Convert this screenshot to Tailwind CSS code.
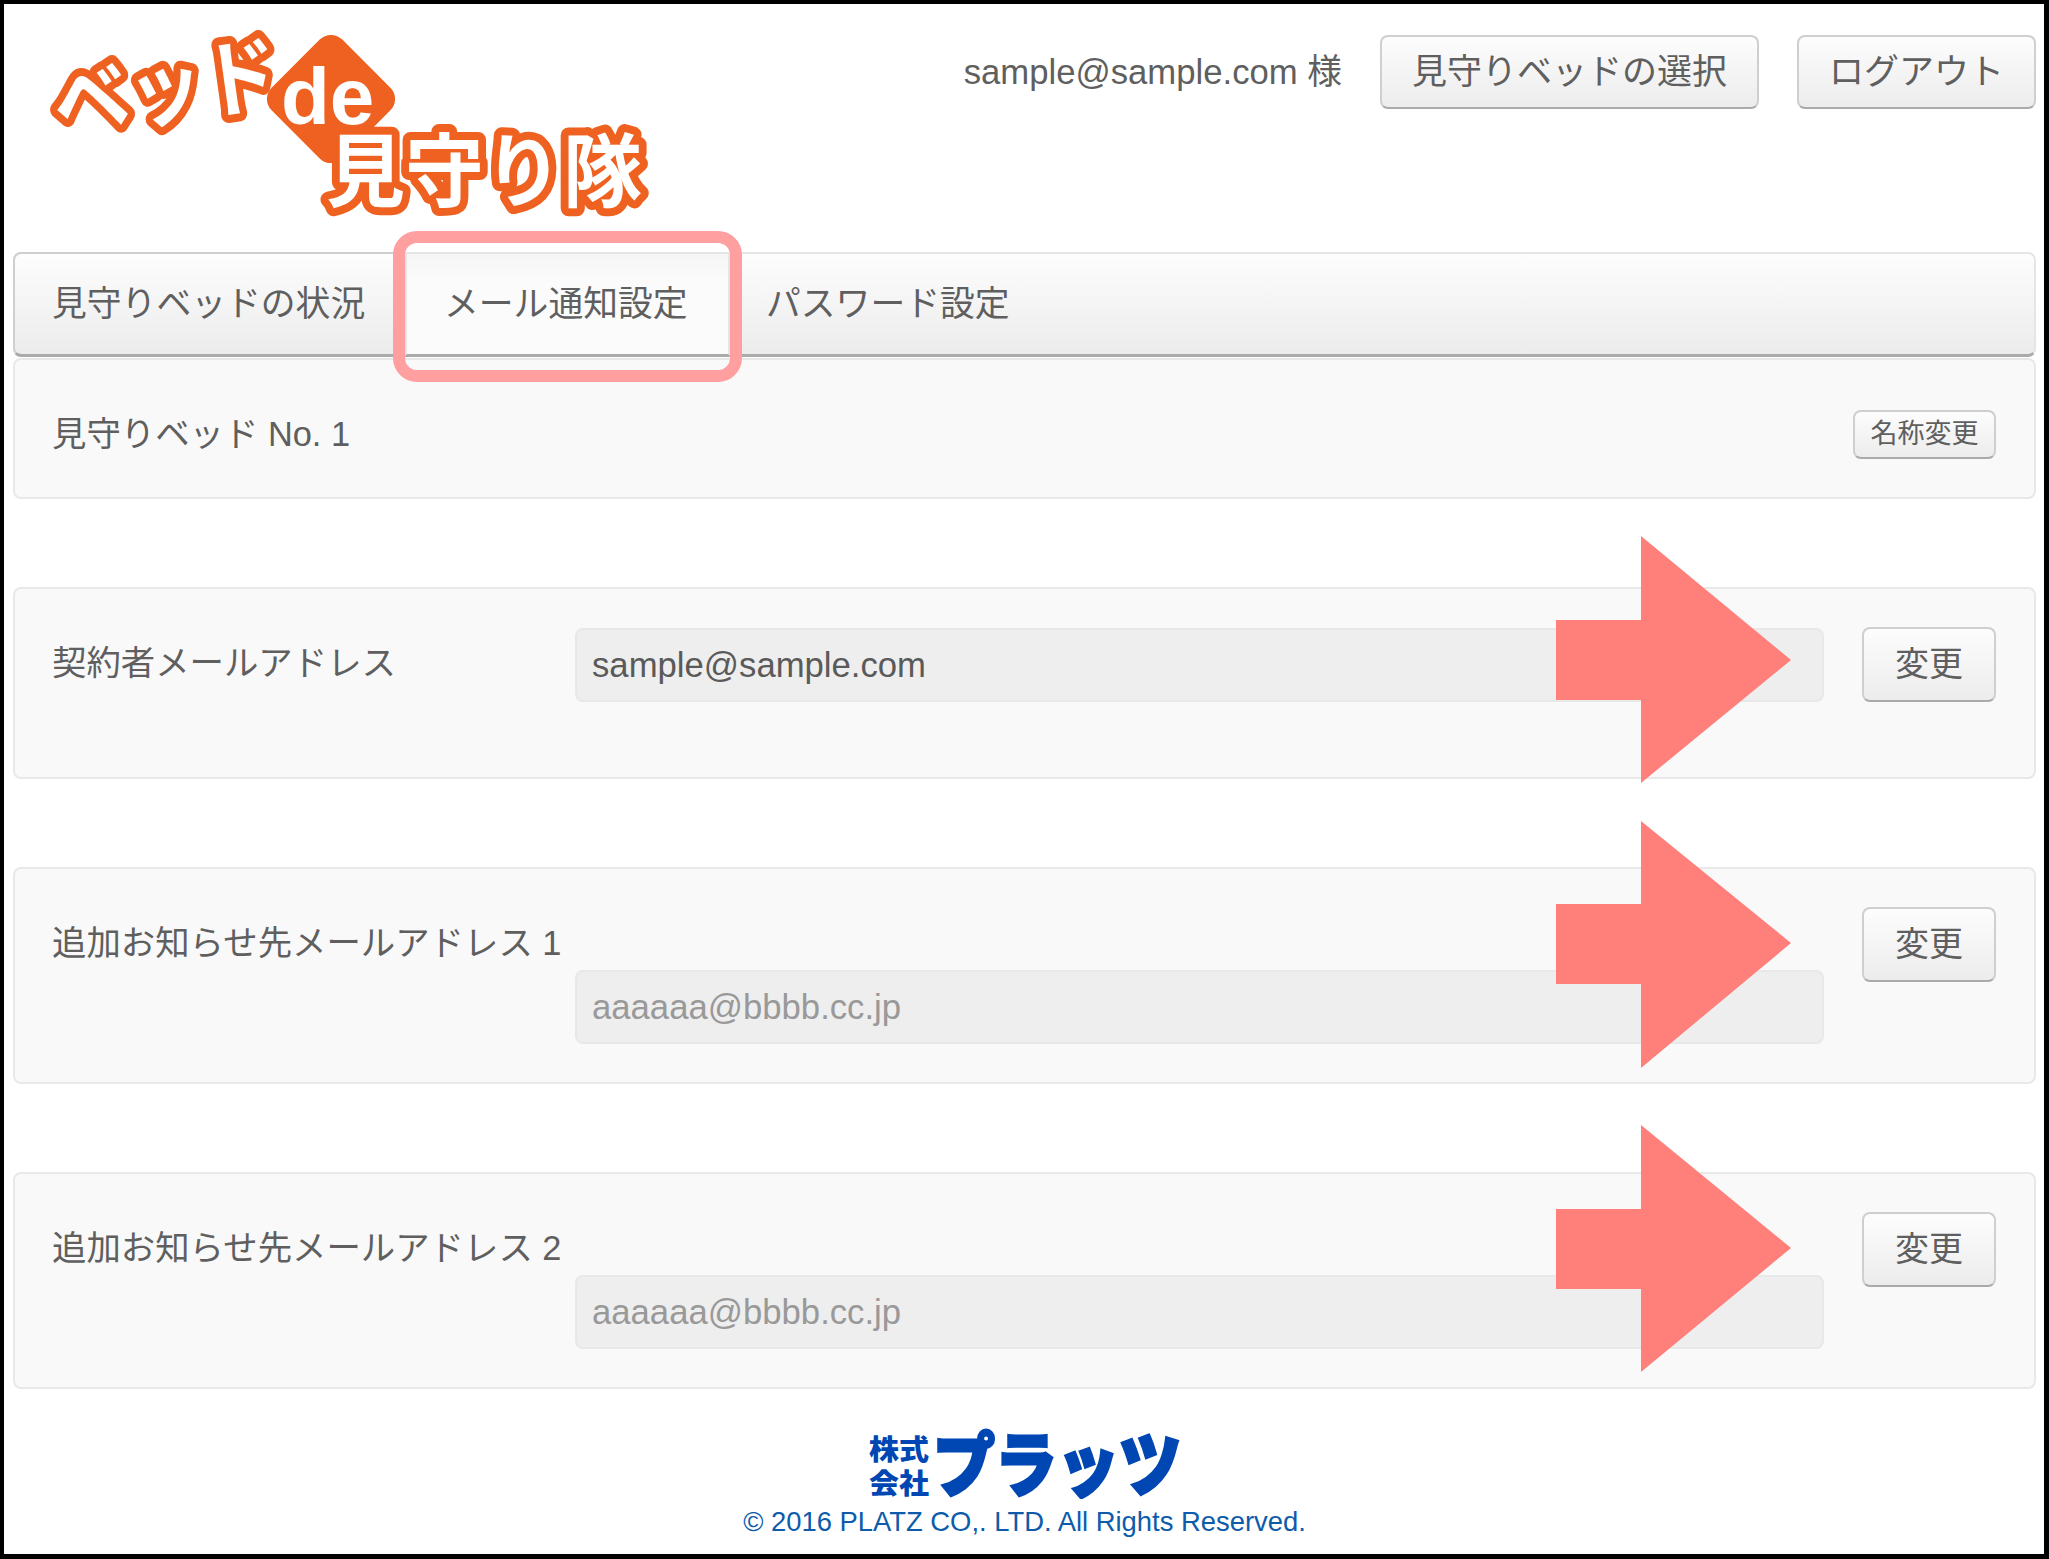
<!DOCTYPE html>
<html lang="ja">
<head>
  <meta charset="UTF-8">
  <title>ベッドde見守り隊 - メール通知設定</title>
  <script src="https://cdn.jsdelivr.net/npm/@tailwindcss/browser@4"></script>
</head>
<body class="bg-black">
  <div class="relative w-[2049px] h-[1559px] bg-black pt-[4px] pb-[5px] pl-[4px] pr-[5px] [font-family:'Liberation_Sans','Noto_Sans_CJK_JP',sans-serif] text-[#5f5f5f]">
    <div class="h-full bg-white pl-[9px] pr-[8px]">

      <!-- Header -->
      <header class="flex justify-between h-[248px] -ml-[9px]">
        <svg class="w-[660px] h-[248px]" viewBox="4 4 660 248">
          <rect x="281" y="49" width="100" height="100" rx="16" fill="#ee6120" transform="rotate(45 331 99)"/>
          <g fill="#fff" stroke="#ee6120" stroke-width="16" stroke-linejoin="round" paint-order="stroke" font-weight="700" class="[font-family:'Noto_Sans_CJK_JP',sans-serif]">
            <text x="58" y="134" font-size="84" transform="rotate(-8 58 134)" textLength="226" lengthAdjust="spacingAndGlyphs">ベッド</text>
            <text x="326" y="200" font-size="80" textLength="316" lengthAdjust="spacingAndGlyphs">見守り隊</text>
          </g>
          <text x="281" y="124" font-size="80" font-weight="700" fill="#fff" class="[font-family:'Liberation_Sans',sans-serif]">de</text>
        </svg>
        <div class="flex items-start pt-[31px]">
          <span class="text-[34.7px] leading-[74px] mr-[38px]">sample@sample.com 様</span>
          <button class="w-[379px] h-[74px] mr-[38px] text-[35px] rounded-lg border-2 border-[#cfcfcf] border-b-[#aaaaaa] bg-linear-to-b from-[#fdfdfd] to-[#ececec]">見守りベッドの選択</button>
          <button class="w-[239px] h-[74px] text-[35px] rounded-lg border-2 border-[#cfcfcf] border-b-[#aaaaaa] bg-linear-to-b from-[#fdfdfd] to-[#ececec]">ログアウト</button>
        </div>
      </header>

      <!-- Tabs -->
      <nav class="flex h-[105px] rounded-lg border-2 border-[#e5e5e5] border-b-[3px] border-b-[#aaaaaa] bg-linear-to-b from-[#fdfdfd] to-[#ececec] text-[34.8px]">
        <a class="flex items-center w-[392px] pl-[37px] -my-[2px] -ml-[2px] rounded-l-lg border-2 border-r-0 border-[#cfcfcf] border-b-[#aaaaaa]">見守りベッドの状況</a>
        <a class="flex items-center w-[325px] pl-[37px] -my-[2px] border-2 border-[#e5e5e5] border-b-[#aaaaaa] bg-linear-to-b from-[#f6f6f6] to-[#fbfbfb] to-30%">メール通知設定</a>
        <a class="flex items-center pl-[36px]">パスワード設定</a>
      </nav>

      <!-- Bed name -->
      <section class="flex items-center justify-between h-[141px] mt-[1px] pt-[12px] pl-[37px] pr-[38px] rounded-lg border-2 border-[#e8e8e8] bg-[#f9f9f9]">
        <span class="text-[34.4px]">見守りベッド No. 1</span>
        <button class="w-[143px] h-[49px] text-[27px] rounded-lg border-2 border-[#cfcfcf] border-b-[#aaaaaa] bg-linear-to-b from-[#fdfdfd] to-[#ececec]">名称変更</button>
      </section>

      <!-- Contract address -->
      <section class="flex h-[192px] mt-[88px] pt-[38px] pl-[37px] pr-[38px] rounded-lg border-2 border-[#e8e8e8] bg-[#f9f9f9]">
        <div class="flex flex-1">
          <div class="w-[523px] text-[34.4px] leading-[72px]">契約者メールアドレス</div>
          <div class="flex items-center h-[74px] flex-1 px-[15px] mt-[1px] text-[34.7px] text-[#5a5a5a] rounded-lg border-2 border-[#e8e8e8] bg-[#eeeeee]">sample@sample.com</div>
        </div>
        <button class="w-[134px] h-[75px] ml-[38px] text-[34px] rounded-lg border-2 border-[#cfcfcf] border-b-[#aaaaaa] bg-linear-to-b from-[#fdfdfd] to-[#ececec]">変更</button>
      </section>

      <!-- Extra address 1 -->
      <section class="flex h-[217px] mt-[88px] pt-[38px] pl-[37px] pr-[38px] rounded-lg border-2 border-[#e8e8e8] bg-[#f9f9f9]">
        <div class="flex-1">
          <div class="h-[63px] text-[34.4px] leading-[72px]">追加お知らせ先メールアドレス 1</div>
          <div class="flex items-center h-[74px] ml-[523px] px-[15px] text-[34.7px] text-[#999999] rounded-lg border-2 border-[#e8e8e8] bg-[#eeeeee]">aaaaaa@bbbb.cc.jp</div>
        </div>
        <button class="w-[134px] h-[75px] ml-[38px] text-[34px] rounded-lg border-2 border-[#cfcfcf] border-b-[#aaaaaa] bg-linear-to-b from-[#fdfdfd] to-[#ececec]">変更</button>
      </section>

      <!-- Extra address 2 -->
      <section class="flex h-[217px] mt-[88px] pt-[38px] pl-[37px] pr-[38px] rounded-lg border-2 border-[#e8e8e8] bg-[#f9f9f9]">
        <div class="flex-1">
          <div class="h-[63px] text-[34.4px] leading-[72px]">追加お知らせ先メールアドレス 2</div>
          <div class="flex items-center h-[74px] ml-[523px] px-[15px] text-[34.7px] text-[#999999] rounded-lg border-2 border-[#e8e8e8] bg-[#eeeeee]">aaaaaa@bbbb.cc.jp</div>
        </div>
        <button class="w-[134px] h-[75px] ml-[38px] text-[34px] rounded-lg border-2 border-[#cfcfcf] border-b-[#aaaaaa] bg-linear-to-b from-[#fdfdfd] to-[#ececec]">変更</button>
      </section>

      <!-- Footer -->
      <footer class="flex flex-col items-center pt-[36px]">
        <svg class="w-[316px] h-[74px]" viewBox="866 1424 316 74">
          <g fill="#0047b3" font-weight="900" class="[font-family:'Noto_Sans_CJK_JP',sans-serif]">
            <text x="868" y="1459" font-size="28" textLength="60" lengthAdjust="spacingAndGlyphs">株式</text>
            <text x="868" y="1493" font-size="28" textLength="60" lengthAdjust="spacingAndGlyphs">会社</text>
            <text x="932" y="1490" font-size="70" stroke="#0047b3" stroke-width="3" textLength="248" lengthAdjust="spacingAndGlyphs">プラッツ</text>
          </g>
        </svg>
        <p class="mt-[7px] text-[27.4px] leading-[32px] text-[#0d5cab]">© 2016 PLATZ CO,. LTD. All Rights Reserved.</p>
      </footer>
    </div>

    <!-- Annotations drawn over the page -->
    <div class="absolute left-[393px] top-[231px] w-[349px] h-[151px] rounded-[24px] border-[12px] border-[#ff9f9f]"></div>
    <svg class="absolute left-0 top-0 w-[2049px] h-[1559px] pointer-events-none" viewBox="0 0 2049 1559">
      <polygon fill="#ff7f7b" points="1556,620 1641,620 1641,536 1791,660 1641,783 1641,700 1556,700"/>
      <polygon fill="#ff7f7b" points="1556,904 1641,904 1641,821 1791,943 1641,1068 1641,984 1556,984"/>
      <polygon fill="#ff7f7b" points="1556,1209 1641,1209 1641,1125 1791,1248 1641,1372 1641,1289 1556,1289"/>
    </svg>
  </div>
</body>
</html>
